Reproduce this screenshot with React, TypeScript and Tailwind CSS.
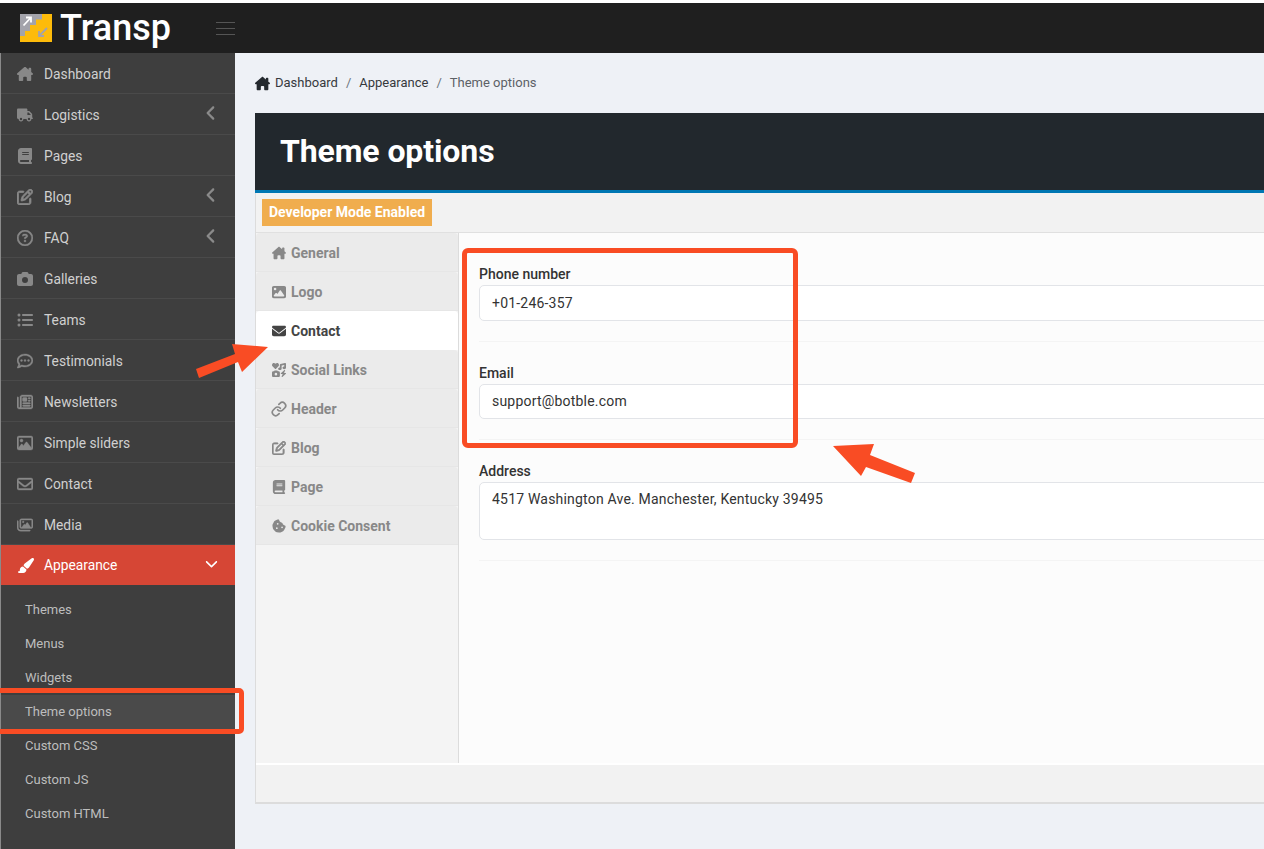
import React from 'react';
import {
  FaHouseChimney, FaTruck, FaBook, FaRegPenToSquare, FaRegCircleQuestion, FaCamera, FaListUl, FaRegCommentDots,
  FaRegNewspaper, FaRegImage, FaRegEnvelope, FaRegImages, FaPaintbrush, FaChevronDown, FaAngleLeft,
  FaImage, FaEnvelope, FaIcons, FaCookieBite,
} from 'react-icons/fa6';
import { Link } from 'lucide-react';

const menu = [
  { label: 'Dashboard', icon: FaHouseChimney },
  { label: 'Logistics', icon: FaTruck, arrow: true },
  { label: 'Pages', icon: FaBook },
  { label: 'Blog', icon: FaRegPenToSquare, arrow: true, stroke: 24 },
  { label: 'FAQ', icon: FaRegCircleQuestion, arrow: true, stroke: 12 },
  { label: 'Galleries', icon: FaCamera },
  { label: 'Teams', icon: FaListUl },
  { label: 'Testimonials', icon: FaRegCommentDots, stroke: 12 },
  { label: 'Newsletters', icon: FaRegNewspaper, stroke: 12 },
  { label: 'Simple sliders', icon: FaRegImage, stroke: 12 },
  { label: 'Contact', icon: FaRegEnvelope, stroke: 12 },
  { label: 'Media', icon: FaRegImages, stroke: 12 },
];

const subMenu = ['Themes', 'Menus', 'Widgets', 'Theme options', 'Custom CSS', 'Custom JS', 'Custom HTML'];

const tabs = [
  { label: 'General', icon: FaHouseChimney },
  { label: 'Logo', icon: FaImage },
  { label: 'Contact', icon: FaEnvelope, active: true },
  { label: 'Social Links', icon: FaIcons },
  { label: 'Header', icon: Link, stroke: 2.5 },
  { label: 'Blog', icon: FaRegPenToSquare, stroke: 24 },
  { label: 'Page', icon: FaBook },
  { label: 'Cookie Consent', icon: FaCookieBite },
];

const Logo = () => (
  <svg width="32" height="28" viewBox="0 0 32 28" className="shrink-0">
    <rect width="32" height="28" fill="#fdbb0a" />
    <path d="M0 0H22V5.500H16V11H10V17H5V22H0Z" fill="#a3a3ab" />
    <path d="M3.500 11.500L10.500 4M6 3.500H11V8.500" stroke="#fff" strokeWidth="1.800" fill="none" />
    <path d="M27 14L19.500 21.500M19 17V22H24" stroke="#a3a3ab" strokeWidth="1.800" fill="none" />
  </svg>
);

const Field = ({ label, value, boxClass }: { label: string; value: string; boxClass: string }) => (
  <div className="border-b border-[#f4f4f4] pb-5 mb-[21px]">
    <label className="block text-[14px] font-medium leading-[20px] text-[#333] mb-[1px]">{label}</label>
    <div className={`bg-white border border-[#e2e4e8] rounded-[5px] px-3 text-[14px] text-[#333] tracking-[0.2px] ${boxClass}`}>
      {value}
    </div>
  </div>
);

export default function App() {
  return (
    <div className="relative h-[849px] w-[1264px] overflow-hidden bg-[#eef1f6] flex flex-col font-['Roboto',sans-serif]">
      <div className="h-[3px] bg-white shrink-0" />

      <header className="h-[50px] bg-[#1f1f1f] flex items-center shrink-0 pl-[20px]">
        <Logo />
        <span className="ml-[8px] text-[36px] font-medium text-white leading-none">Transp</span>
        <div className="ml-[45px] w-[19px] flex flex-col gap-[5px]">
          <span className="h-px bg-[#555]" />
          <span className="h-px bg-[#555]" />
          <span className="h-px bg-[#555]" />
        </div>
      </header>

      <div className="flex flex-1 min-h-0">
        <aside className="w-[235px] shrink-0 bg-[#3e3e3e] border-l border-[#8a8a8a]">
          {menu.map((item) => (
            <div key={item.label} className="h-[41px] flex items-center border-b border-[#4a4a4a] pl-[14px] pr-[15px] pt-[2px]">
              <span className="w-[20px] flex justify-center text-[#888]">
                <item.icon className="h-[16px] w-auto" strokeWidth={item.stroke} />
              </span>
              <span className="ml-[9px] text-[13.8px] text-[#d0d0d0] flex-1">{item.label}</span>
              {item.arrow && <FaAngleLeft className="h-[18px] w-auto text-[#8a8a8a] -mt-[5px]" />}
            </div>
          ))}
          <div className="h-[40px] flex items-center bg-[#d64635] pl-[14px] pr-[17px]">
            <span className="w-[20px] flex justify-center text-white">
              <FaPaintbrush className="h-[17px] w-auto" />
            </span>
            <span className="ml-[9px] text-[13.8px] text-white flex-1">Appearance</span>
            <FaChevronDown size={13} className="text-white -mt-[3px]" />
          </div>
          <div className="pt-[8px]">
            {subMenu.map((label) => (
              <div
                key={label}
                className={`h-[34px] flex items-center pl-[24px] text-[13px] text-[#bdbdbd] ${
                  label === 'Theme options' ? 'bg-[#4a4a4a]' : ''
                }`}
              >
                {label}
              </div>
            ))}
          </div>
        </aside>

        <main className="flex-1 min-w-0 pl-[20px]">
          <div className="h-[60px] flex items-center text-[13px] text-[#36393d]">
            <FaHouseChimney className="h-[15px] w-auto text-[#24292e] mr-[5px]" />
            <span>Dashboard</span>
            <span className="mx-[8px] text-[#6c757d]">/</span>
            <span>Appearance</span>
            <span className="mx-[8px] text-[#6c757d]">/</span>
            <span className="text-[#5c6166]">Theme options</span>
          </div>

          <div className="h-[80px] bg-[#22282d] border-b-[3px] border-[#0077b3] flex items-center pl-[25px]">
            <h1 className="text-[32px] font-bold text-white leading-none -mt-[1px] tracking-[-0.1px]">Theme options</h1>
          </div>

          <div className="h-[611px] border-l border-[#dcdcdc] border-b-2 border-b-[#dcdcdc] flex flex-col">
            <div className="h-[40px] bg-[#f2f2f2] border-b border-[#e0e0e0] pl-[6px] pt-[6px] shrink-0">
              <span className="inline-flex items-center h-[27px] px-[7px] bg-[#f0ad4e] text-white text-[14px] font-bold">
                Developer Mode Enabled
              </span>
            </div>

            <div className="h-[532px] flex shrink-0 border-b-2 border-white">
              <div className="w-[203px] bg-[#f4f4f4] border-r border-[#dcdcdc] shrink-0">
                {tabs.map((tab) => (
                  <div
                    key={tab.label}
                    className={`h-[39px] flex items-center pl-[15px] pt-[2px] text-[14px] font-bold rounded-t-[4px] border-b ${
                      tab.active
                        ? 'bg-white border-white text-[#444]'
                        : 'bg-[#ebebeb] border-[#e6e6e6] text-[#888]'
                    }`}
                  >
                    <span className="w-[16px] flex justify-center">
                      <tab.icon className={tab.label === 'Header' ? 'h-[16px] w-[16px] shrink-0' : 'h-[14px] w-auto'} strokeWidth={tab.stroke} />
                    </span>
                    <span className="ml-[4px]">{tab.label}</span>
                  </div>
                ))}
              </div>
              <div className="flex-1 min-w-0 overflow-hidden bg-[#fcfcfc] pl-[20px] pt-[31px]">
                <div className="w-[900px]">
                  <Field label="Phone number" value="+01-246-357" boxClass="h-[36px] flex items-center" />
                  <Field label="Email" value="support@botble.com" boxClass="h-[35px] flex items-center" />
                  <Field label="Address" value="4517 Washington Ave. Manchester, Kentucky 39495" boxClass="h-[58px] pt-[6px]" />
                </div>
              </div>
            </div>

            <div className="flex-1 bg-[#f2f2f2]" />
          </div>
        </main>
      </div>

      {/* red annotations drawn on top of the screenshot */}
      <div className="absolute left-[462px] top-[248px] w-[336px] h-[200px] border-[5px] border-[#f94c24] rounded-[6px]" />
      <div className="absolute left-[-8px] top-[688px] w-[252px] h-[46px] border-[5px] border-[#f94c24] rounded-[5px]" />
      <svg className="absolute left-0 top-0 pointer-events-none" width="1264" height="849">
        <polygon points="232,344 268,347 242,372 238,362 199,378 196,369 235,354" fill="#f94c24" />
        <polygon points="833,446 874,444 870,455 915,473 911,483 866,467 861,476" fill="#f94c24" />
      </svg>
    </div>
  );
}
